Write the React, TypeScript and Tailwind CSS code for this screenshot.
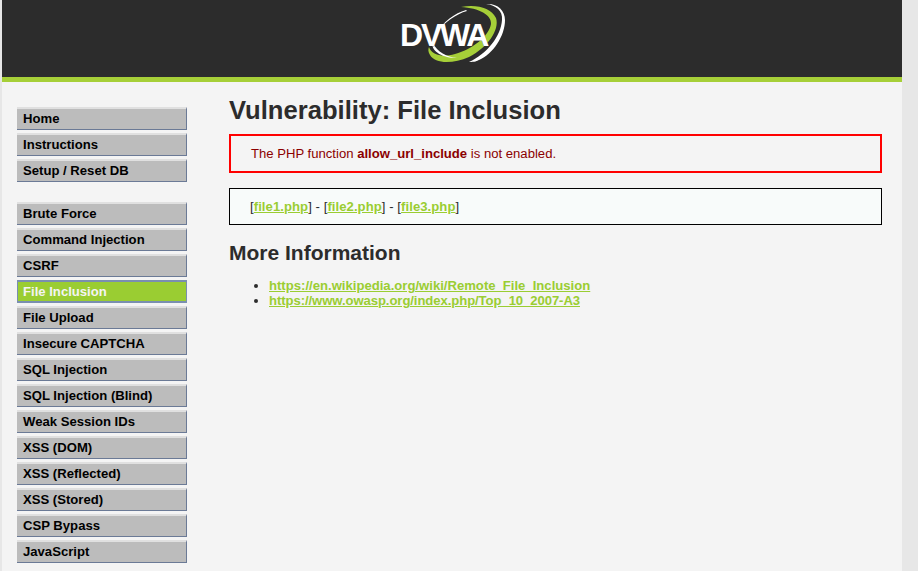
const topMenu = ["Home", "Instructions", "Setup / Reset DB"];
const vulnMenu = [
  "Brute Force",
  "Command Injection",
  "CSRF",
  "File Inclusion",
  "File Upload",
  "Insecure CAPTCHA",
  "SQL Injection",
  "SQL Injection (Blind)",
  "Weak Session IDs",
  "XSS (DOM)",
  "XSS (Reflected)",
  "XSS (Stored)",
  "CSP Bypass",
  "JavaScript",
];

const MenuItem = ({ label }: { label: string }) => {
  const active = label === "File Inclusion";
  return (
    <li
      className={
        active
          ? "mb-[3px] h-[23px] border-2 border-x-[1px] border-[#7a8fb0] bg-[#9acd32] pl-[5px] text-[13.12px] leading-[19px] font-bold text-[#f4f4f4]"
          : "mb-[3px] h-[23px] border-t-2 border-r border-b border-t-[#e0e0e0] border-r-[#6b7a96] border-b-[#6b7a96] bg-[#bcbcbc] pl-[6px] text-[13.12px] leading-[20px] font-bold text-black"
      }
    >
      {label}
    </li>
  );
};

const Logo = () => (
  <svg width="110" height="68" viewBox="0 0 110 68" className="block">
    <path d="M62 7 C78 4 92 8 97 18 C101 30 88 48 70 57 C54 64 36 64 31 55 C29 52 29 49 30 47 C32 54 42 58 56 54 C74 49 90 36 92 24 C93 15 80 8 62 7 Z" fill="#a6cf38" />
    <path d="M87 4 C97 5 104 11 103 20 C102 36 88 54 70 62 C76 62 78 61 80 60 C94 54 106 36 106 20 C106 10 98 3 87 4 Z" fill="#ffffff" />
    <path d="M67 10 C56 13 44 22 37 33 C46 22 57 14 68 11 Z" fill="#ffffff" />
    <path d="M33 43 C33 52 44 58 58 58 C48 57 38 52 34 43 Z" fill="#ffffff" />
    <text x="1" y="46" fontFamily="'Liberation Sans', Arial, sans-serif" fontWeight="700" fontSize="32" letterSpacing="-2.2" fill="#ffffff" stroke="#2c2c2c" strokeWidth="0.4" paintOrder="stroke">
      DVWA
    </text>
  </svg>
);

export default function App() {
  return (
    <div className="h-[571px] overflow-hidden bg-[#e7e7e7] pl-[2px] font-['Liberation_Sans',Arial,sans-serif] text-[13.12px]">
      <div className="h-[571px] w-[900px] bg-[#f4f4f4]">
        <header className="flex h-[82px] justify-center border-b-[5px] border-[#a6cf38] bg-[#2c2c2c] pl-[4px]">
          <Logo />
        </header>
        <div className="flex">
          <nav className="ml-[15px] w-[170px] pt-[25px]">
            <ul className="mb-[20px]">
              {topMenu.map((m) => (
                <MenuItem key={m} label={m} />
              ))}
            </ul>
            <ul>
              {vulnMenu.map((m) => (
                <MenuItem key={m} label={m} />
              ))}
            </ul>
          </nav>
          <main className="ml-[42px] w-[653px] text-[#2c2c2c]">
            <h1 className="mt-[13px] text-[25.6px] leading-[30px] font-bold">Vulnerability: File Inclusion</h1>
            <div className="mt-[9px] h-[39px] border-2 border-[#ff0000] pl-5 leading-[35px] text-[#8b0000]">
              The PHP function <b>allow_url_include</b> is not enabled.
            </div>
            <div className="mt-[15px] h-[37px] border border-black bg-[#f8fbfa] pl-5 leading-[35px] tracking-[0.06px]">
              [<a className="font-bold text-[#9acd32] underline">file1.php</a>] - [
              <a className="font-bold text-[#9acd32] underline">file2.php</a>] - [
              <a className="font-bold text-[#9acd32] underline">file3.php</a>]
            </div>
            <h2 className="mt-[16px] text-[21px] leading-[23px] font-bold">More Information</h2>
            <ul className="mt-[14px] list-disc pl-10 leading-[15px]">
              <li>
                <a className="font-bold text-[#9acd32] underline">https://en.wikipedia.org/wiki/Remote_File_Inclusion</a>
              </li>
              <li>
                <a className="font-bold tracking-[-0.08px] text-[#9acd32] underline">https://www.owasp.org/index.php/Top_10_2007-A3</a>
              </li>
            </ul>
          </main>
        </div>
      </div>
    </div>
  );
}
